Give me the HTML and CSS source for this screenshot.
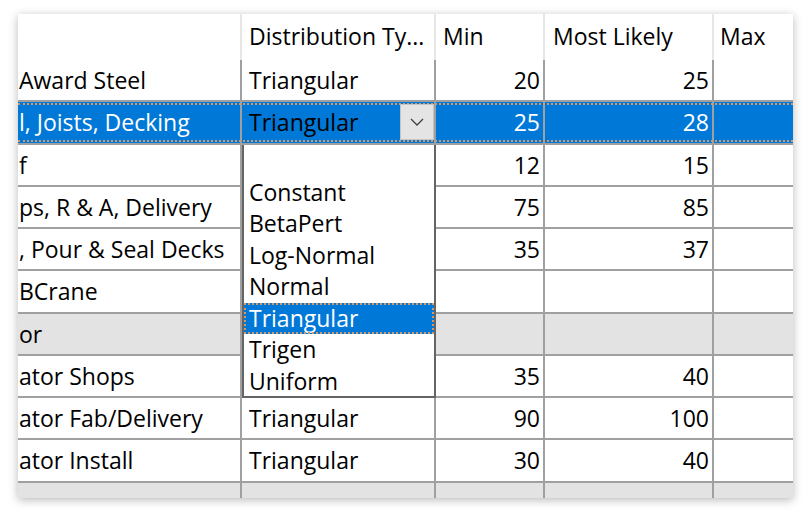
FILE: index.html
```html
<!DOCTYPE html>
<html lang="en">

<head>
    <meta charset="UTF-8">
    <title>Distribution grid</title>
    <link rel="stylesheet" href="styles.css">
</head>

<body>
    <div class="sheet">
        <div class="grid">
            <div class="row head">
                <div class="cell"></div>
                <div class="cell">Distribution Ty...</div>
                <div class="cell">Min</div>
                <div class="cell">Most Likely</div>
                <div class="cell">Max</div>
            </div>
            <div class="row">
                <div class="cell name">Award Steel</div>
                <div class="cell">Triangular</div>
                <div class="cell num">20</div>
                <div class="cell num">25</div>
                <div class="cell"></div>
            </div>
            <div class="row selected">
                <div class="cell name">l, Joists, Decking</div>
                <div class="cell combo">
                    <span>Triangular</span>
                    <span class="drop-btn">
                        <svg width="14" height="8" viewBox="0 0 14 8">
                            <path d="M1 1 L7 7 L13 1" fill="none" stroke="#404040" stroke-width="1.3" />
                        </svg>
                    </span>
                </div>
                <div class="cell num">25</div>
                <div class="cell num">28</div>
                <div class="cell"></div>
            </div>
            <div class="row">
                <div class="cell name">f</div>
                <div class="cell"></div>
                <div class="cell num">12</div>
                <div class="cell num">15</div>
                <div class="cell"></div>
            </div>
            <div class="row">
                <div class="cell name">ps, R &amp; A, Delivery</div>
                <div class="cell"></div>
                <div class="cell num">75</div>
                <div class="cell num">85</div>
                <div class="cell"></div>
            </div>
            <div class="row">
                <div class="cell name">, Pour &amp; Seal Decks</div>
                <div class="cell"></div>
                <div class="cell num">35</div>
                <div class="cell num">37</div>
                <div class="cell"></div>
            </div>
            <div class="row">
                <div class="cell name">BCrane</div>
                <div class="cell"></div>
                <div class="cell num"></div>
                <div class="cell num"></div>
                <div class="cell"></div>
            </div>
            <div class="row group">
                <div class="cell name">or</div>
                <div class="cell"></div>
                <div class="cell"></div>
                <div class="cell"></div>
                <div class="cell"></div>
            </div>
            <div class="row">
                <div class="cell name">ator Shops</div>
                <div class="cell"></div>
                <div class="cell num">35</div>
                <div class="cell num">40</div>
                <div class="cell"></div>
            </div>
            <div class="row">
                <div class="cell name">ator Fab/Delivery</div>
                <div class="cell">Triangular</div>
                <div class="cell num">90</div>
                <div class="cell num">100</div>
                <div class="cell"></div>
            </div>
            <div class="row">
                <div class="cell name">ator Install</div>
                <div class="cell">Triangular</div>
                <div class="cell num">30</div>
                <div class="cell num">40</div>
                <div class="cell"></div>
            </div>
            <div class="row group">
                <div class="cell"></div>
                <div class="cell"></div>
                <div class="cell"></div>
                <div class="cell"></div>
                <div class="cell"></div>
            </div>
        </div>

        <!-- open list of the distribution combo -->
        <ul class="dropdown">
            <li></li>
            <li>Constant</li>
            <li>BetaPert</li>
            <li>Log-Normal</li>
            <li>Normal</li>
            <li class="active">Triangular</li>
            <li>Trigen</li>
            <li>Uniform</li>
        </ul>
    </div>
</body>

</html>
```

FILE: styles.css
```css
* {
    margin: 0;
    padding: 0;
    box-sizing: border-box;
}

body {
    background: #ffffff;
    padding: 14px 18px;
    font-family: 'Open Sans', 'Noto Sans', sans-serif;
    font-size: 23px;
    color: #000;
}

.sheet {
    position: relative;
    width: 775px;
    height: 484px;
    background: white;
    overflow: hidden;
    box-shadow: 0 2px 9px rgba(0, 0, 0, 0.28);
}

.row {
    position: relative;
    display: grid;
    grid-template-columns: 224px 194px 109px 169px 79px;
    height: 42.25px;
}

.cell {
    display: flex;
    align-items: center;
    padding: 0 7px;
    white-space: nowrap;
    overflow: hidden;
    border-right: 2px solid #a0a0a0;
    border-bottom: 2px solid #a0a0a0;
}

.cell:last-child {
    border-right: none;
}

.cell.name {
    padding-left: 1px;
}

.cell.num {
    justify-content: flex-end;
    padding-right: 3px;
}

.row.head {
    height: 46px;
}

.row.head .cell {
    border-bottom: none;
    border-right-color: #e6e6e6;
    padding-bottom: 2px;
}

.row.head .cell:nth-child(3) {
    padding-left: 7px;
}

.row.head .cell:nth-child(4) {
    padding-left: 8px;
}

.row.head .cell:nth-child(5) {
    padding-left: 6px;
}

.row.group .cell {
    background: #e3e3e3;
}

/* selected row */
.row.selected {
    background: #0078d7;
    color: white;
}

.row.selected::after {
    content: "";
    position: absolute;
    left: 0;
    right: 0;
    top: 1px;
    bottom: 3px;
    border-top: 2px dotted #d29a6c;
    border-bottom: 2px dotted #d29a6c;
    pointer-events: none;
}

.cell.combo {
    color: #000;
    padding-right: 0;
    justify-content: space-between;
}

.drop-btn {
    width: 34px;
    height: 36px;
    margin-right: 0;
    display: flex;
    align-items: center;
    justify-content: center;
    background: #e4e4e4;
    border: 1px solid #c4c4c4;
    position: relative;
    z-index: 1;
}

/* dropdown list */
.dropdown {
    position: absolute;
    left: 224px;
    top: 131px;
    width: 194px;
    height: 253px;
    list-style: none;
    background: white;
    border: 2px solid #646464;
    border-top: none;
}

.dropdown li {
    height: 31.5px;
    line-height: 31px;
    padding-left: 5px;
}

.dropdown li.active {
    background: #0078d7;
    color: white;
    outline: 2px dotted #d29a6c;
    outline-offset: -2px;
}
```
